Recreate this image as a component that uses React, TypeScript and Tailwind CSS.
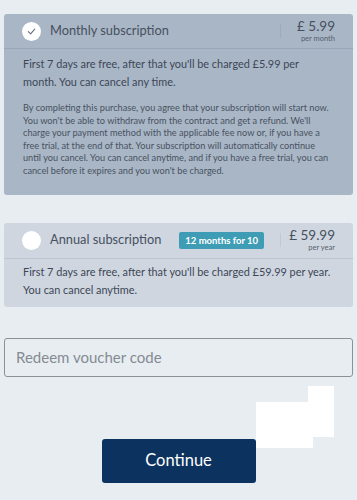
import React from 'react';

const Check: React.FC = () => (
  <svg width="9" height="9" viewBox="0 0 10 10" fill="none">
    <path d="M1.5 5.2 L4 7.6 L8.6 2.4" stroke="#6b7480" strokeWidth="1.3" strokeLinecap="round" strokeLinejoin="round" />
  </svg>
);

const App: React.FC = () => {
  return (
    <div className="relative min-h-[500px] bg-[#e8edf1] px-1 pt-[14px] font-['Lato',sans-serif] text-[#3c4756]">
      {/* monthly plan, selected */}
      <div className="rounded-[3px] bg-[#a9b6c6]">
        <div className="flex h-[35px] items-center border-b border-[#9aa7b8] pl-[18px] pr-[18px]">
          <div className="flex h-[19px] w-[19px] items-center justify-center rounded-full bg-white">
            <Check />
          </div>
          <span className="ml-[9px] text-[12.8px] text-[#46505e]">Monthly subscription</span>
          <div className="flex-1" />
          <div className="h-[14px] w-px bg-[#9eabbc]" />
          <div className="w-[54px] text-right leading-none">
            <div className="text-[13.5px] text-[#46505e]">£ 5.99</div>
            <div className="mt-[2px] text-[7.5px] text-[#56606d]">per month</div>
          </div>
        </div>
        <div className="pb-[17px] pl-[19px] pr-[18px] pt-[6px]">
          <p className="text-[10.9px] leading-[18px] text-[#3c4756]">
            First 7 days are free, after that you'll be charged £5.99 per month. You can cancel any time.
          </p>
          <p className="mt-[11px] text-[9.2px] leading-[12.6px] text-[#48525f]">
            By completing this purchase, you agree that your subscription will start now. You won't be able to withdraw from the contract and get a refund. We'll charge your payment method with the applicable fee now or, if you have a free trial, at the end of that. Your subscription will automatically continue until you cancel. You can cancel anytime, and if you have a free trial, you can cancel before it expires and you won't be charged.
          </p>
        </div>
      </div>

      {/* annual plan */}
      <div className="mt-[28px] rounded-[3px] bg-[#cfd6e0]">
        <div className="flex h-[36px] items-center border-b border-[#bcc5d1] pl-[18px] pr-[18px]">
          <div className="h-[19px] w-[19px] rounded-full bg-white" />
          <span className="ml-[9px] text-[12.8px] text-[#46505e]">Annual subscription</span>
          <span className="ml-[18px] rounded-[2px] bg-[#3e9db5] px-[6px] py-[3px] text-[9.5px] font-bold leading-[11px] text-white">
            12 months for 10
          </span>
          <div className="flex-1" />
          <div className="h-[14px] w-px bg-[#bfc8d3]" />
          <div className="w-[54px] text-right leading-none">
            <div className="text-[13.5px] text-[#46505e]">£ 59.99</div>
            <div className="mt-[2px] text-[7.5px] text-[#56606d]">per year</div>
          </div>
        </div>
        <div className="pb-[8px] pl-[19px] pr-[10px] pt-[4px]">
          <p className="text-[10.9px] leading-[18px] text-[#3c4756]">
            First 7 days are free, after that you'll be charged £59.99 per year. You can cancel anytime.
          </p>
        </div>
      </div>

      {/* voucher */}
      <div className="mt-[31px] flex h-[39px] items-center rounded-[3px] border border-[#8c9198] px-[11px]">
        <span className="text-[15px] text-[#858b93]">Redeem voucher code</span>
      </div>

      <div className="mt-[62px] flex justify-center">
        <button className="h-[44px] w-[154px] rounded-[3px] bg-[#0c3360] text-[16.5px] text-white">
          Continue
        </button>
      </div>

      {/* white blocks over the page */}
      <div className="absolute left-[308px] top-[386px] h-[51px] w-[26px] bg-white" />
      <div className="absolute left-[256px] top-[402px] h-[46px] w-[57px] bg-white" />
    </div>
  );
};

export default App;
